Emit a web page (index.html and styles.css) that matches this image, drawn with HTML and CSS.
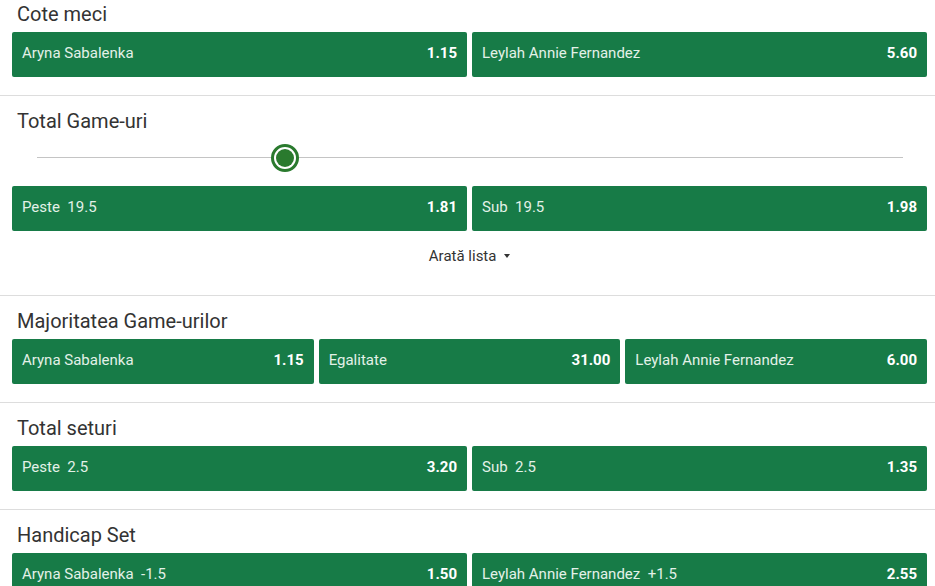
FILE: index.html
```html
<!DOCTYPE html>
<html lang="ro">
<head>
  <meta charset="utf-8">
  <title>Cote meci</title>
  <link rel="stylesheet" href="styles.css">
</head>
<body>
  <div class="market first">
    <div class="market-title">Cote meci</div>
    <div class="odds-row cols-2">
      <button class="odd"><span class="lbl">Aryna Sabalenka</span><span class="val">1.15</span></button>
      <button class="odd"><span class="lbl">Leylah Annie Fernandez</span><span class="val">5.60</span></button>
    </div>
  </div>

  <div class="market">
    <div class="market-title">Total Game-uri</div>
    <div class="slider">
      <div class="slider-track"></div>
      <div class="slider-thumb" style="left: 234px"><span></span></div>
    </div>
    <div class="odds-row cols-2">
      <button class="odd"><span class="lbl">Peste&nbsp;&nbsp;19.5</span><span class="val">1.81</span></button>
      <button class="odd"><span class="lbl">Sub&nbsp;&nbsp;19.5</span><span class="val">1.98</span></button>
    </div>
    <div class="show-list">Arată lista <span class="caret"></span></div>
  </div>

  <div class="market">
    <div class="market-title">Majoritatea Game-urilor</div>
    <div class="odds-row cols-3">
      <button class="odd"><span class="lbl">Aryna Sabalenka</span><span class="val">1.15</span></button>
      <button class="odd"><span class="lbl">Egalitate</span><span class="val">31.00</span></button>
      <button class="odd"><span class="lbl">Leylah Annie Fernandez</span><span class="val">6.00</span></button>
    </div>
  </div>

  <div class="market">
    <div class="market-title">Total seturi</div>
    <div class="odds-row cols-2">
      <button class="odd"><span class="lbl">Peste&nbsp;&nbsp;2.5</span><span class="val">3.20</span></button>
      <button class="odd"><span class="lbl">Sub&nbsp;&nbsp;2.5</span><span class="val">1.35</span></button>
    </div>
  </div>

  <div class="market">
    <div class="market-title">Handicap Set</div>
    <div class="odds-row cols-2">
      <button class="odd"><span class="lbl">Aryna Sabalenka&nbsp;&nbsp;-1.5</span><span class="val">1.50</span></button>
      <button class="odd"><span class="lbl">Leylah Annie Fernandez&nbsp;&nbsp;+1.5</span><span class="val">2.55</span></button>
    </div>
  </div>
</body>
</html>
```

FILE: styles.css
```css
html, body {
  margin: 0; padding: 0;
  background: #fff;
  color: #333;
  font-family: Roboto, Arial, sans-serif;
  overflow: hidden;
}
.market {
  border-top: 1px solid #ddd;
  padding: 13px 8px 18px 12px;
}
.market.first {
  border-top: none;
  padding-top: 2px;
}
.market-title {
  font-size: 20px;
  line-height: 24px;
  padding-left: 5px;
  margin-bottom: 6px;
  color: #333;
}
.odds-row {
  display: grid;
  gap: 5px;
}
.odds-row.cols-2 { grid-template-columns: 1fr 1fr; }
.odds-row.cols-3 { grid-template-columns: 1fr 1fr 1fr; }
.odd {
  display: flex; align-items: center; justify-content: space-between;
  height: 45px;
  padding: 0 10px 3px;
  border: none; outline: none;
  border-radius: 2px;
  background: #177b47;
  font-family: Roboto, Arial, sans-serif;
  cursor: pointer;
  box-sizing: border-box;
}
.odd .lbl {
  font-size: 15px;
  color: #e3f1e8;
  white-space: nowrap;
}
.odd .val {
  font-size: 15px;
  font-weight: 700;
  color: #fff;
}
.odd:hover { background: #1a8a50; }

.slider {
  position: relative;
  height: 28px;
  margin: 11px 24px 14px 25px;
}
.slider-track {
  position: absolute;
  left: 0; right: 0; top: 13px;
  height: 1px;
  background: #c4c4c4;
}
.slider-thumb {
  position: absolute;
  top: 0;
  width: 28px; height: 28px;
  box-sizing: border-box;
  border: 3px solid #2a7a2e;
  border-radius: 50%;
  background: #fff;
  display: flex; align-items: center; justify-content: center;
}
.slider-thumb span {
  width: 18px; height: 18px;
  border-radius: 50%;
  background: #2a7a2e;
}

.show-list {
  text-align: center;
  font-size: 15px;
  line-height: 16px;
  color: #333;
  margin-top: 17px;
  padding-bottom: 13px;
}
.caret {
  display: inline-block;
  width: 0; height: 0;
  margin-left: 4px;
  vertical-align: 3px;
  border-left: 3px solid transparent;
  border-right: 3px solid transparent;
  border-top: 4px solid #333;
}
```
